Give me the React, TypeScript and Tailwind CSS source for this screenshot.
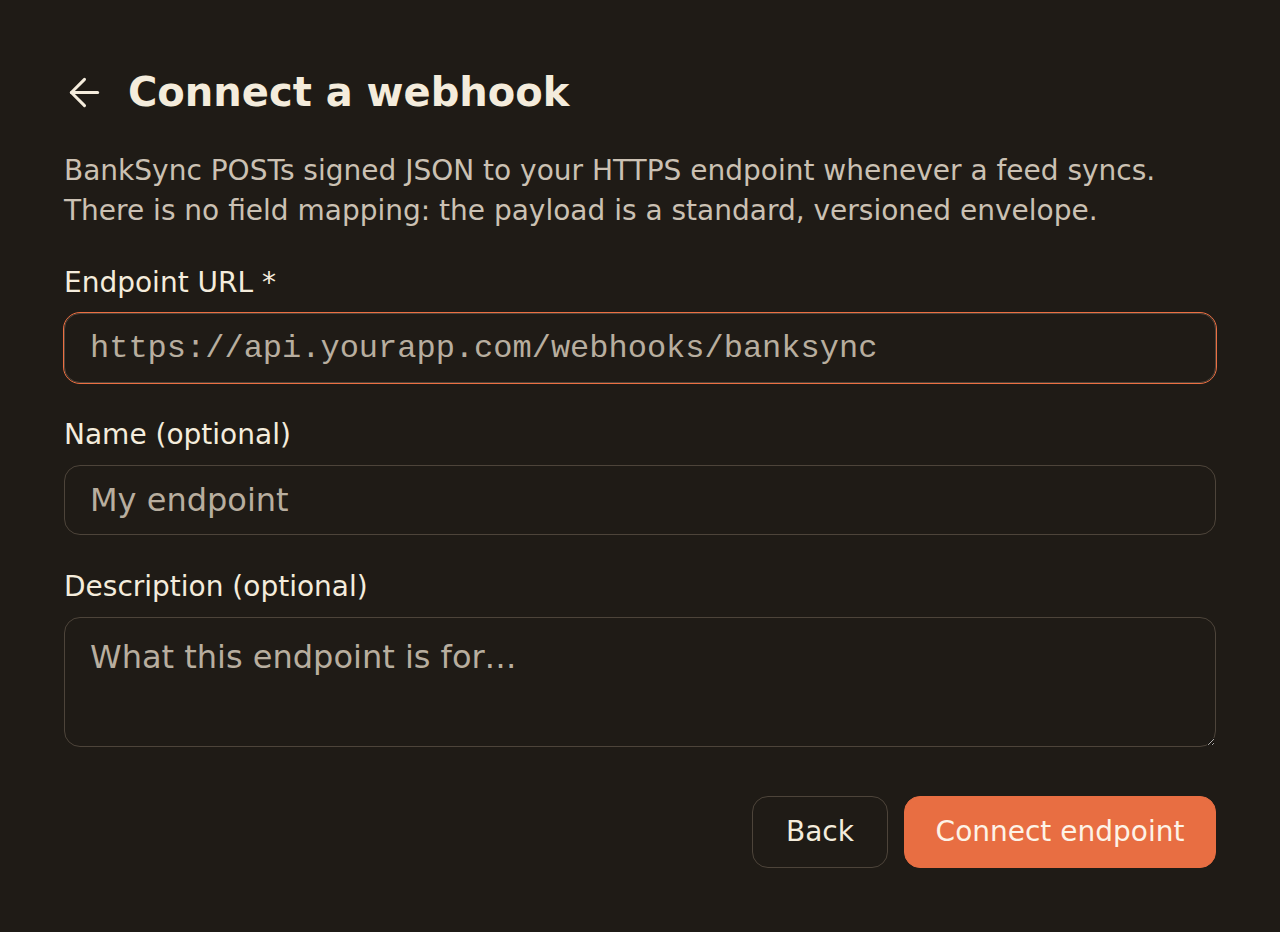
import React from "react";
import { ArrowLeft } from "lucide-react";

export default function App() {
  return (
    <div
      className="min-h-[932px] w-full bg-[#1f1b16] px-16 pt-16 pb-16 text-[#f4ecdc]"
      style={{ fontFamily: '"DejaVu Sans", sans-serif' }}
    >
      <div className="flex h-14 items-center gap-6">
        <button type="button" className="-ml-[2px] flex items-center text-[#f4ecdc]">
          <ArrowLeft size={45} strokeWidth={1.6} />
        </button>
        <h1 className="-ml-[3px] text-[40px] font-bold leading-[56px] text-[#f4ecdc]">Connect a webhook</h1>
      </div>

      <p className="mt-[31px] text-[28px] leading-[40px] text-[#cbc1b3]">
        BankSync POSTs signed JSON to your HTTPS endpoint whenever a feed syncs.
        <br />
        There is no field mapping: the payload is a standard, versioned envelope.
      </p>

      <div className="mt-8 flex flex-col gap-8">
        <div className="flex flex-col gap-[10px]">
          <label className="text-[28px] leading-[40px] text-[#f4ecdc]">Endpoint URL *</label>
          <input
            type="text"
            placeholder="https://api.yourapp.com/webhooks/banksync"
            className="h-[70px] w-full rounded-[16px] border border-[#4d443a] bg-transparent px-[25px] text-[32px] leading-[48px] text-[#f4ecdc] outline outline-[length:1.5px] outline-[#ec6f42] placeholder:text-[#b8ae9f]"
            style={{ fontFamily: '"Liberation Mono", monospace' }}
          />
        </div>

        <div className="flex flex-col gap-[10px]">
          <label className="text-[28px] leading-[40px] text-[#f4ecdc]">Name (optional)</label>
          <input
            type="text"
            placeholder="My endpoint"
            className="h-[70px] w-full rounded-[16px] border border-[#4d443a] bg-transparent px-[25px] text-[32px] leading-[48px] text-[#f4ecdc] outline-none placeholder:text-[#b8ae9f]"
          />
        </div>

        <div className="flex flex-col gap-[10px]">
          <label className="text-[28px] leading-[40px] text-[#f4ecdc]">Description (optional)</label>
          <textarea
            placeholder="What this endpoint is for…"
            className="block h-[130px] w-full rounded-[16px] border border-[#4d443a] bg-transparent px-[25px] pt-[15px] text-[32px] leading-[48px] text-[#f4ecdc] outline-none placeholder:text-[#b8ae9f]"
          />
        </div>
      </div>

      <div className="mt-[49px] flex justify-end gap-4">
        <button
          type="button"
          className="h-[72px] w-[136px] rounded-[16px] border border-[#4d443a] text-[28px] leading-[40px] text-[#f4ecdc]"
        >
          Back
        </button>
        <button
          type="button"
          className="h-[72px] w-[312px] rounded-[16px] border border-[#e86e42] bg-[#e86e42] text-[28px] leading-[40px] text-[#fdf3e7]"
        >
          Connect endpoint
        </button>
      </div>
    </div>
  );
}
